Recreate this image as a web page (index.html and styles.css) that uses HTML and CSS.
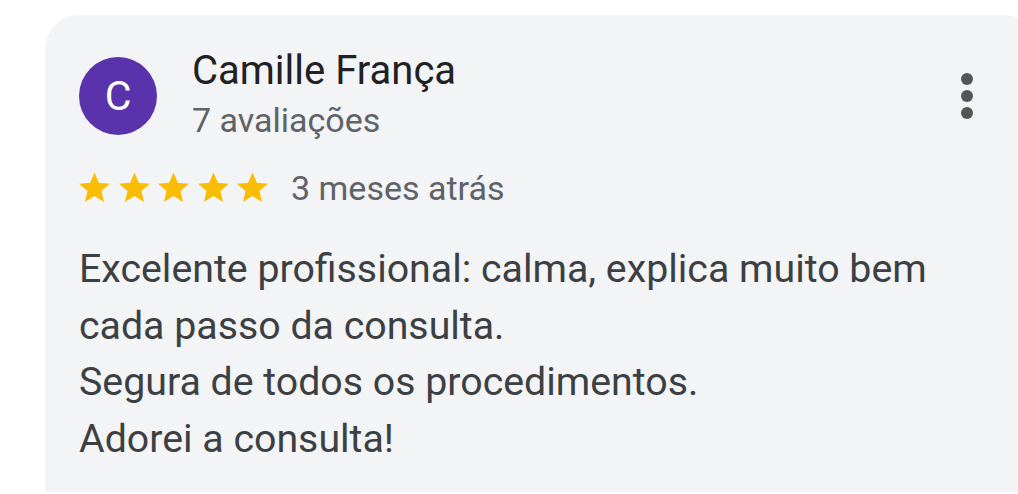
FILE: index.html
```html
<!DOCTYPE html>
<html lang="pt-BR">

<head>
    <meta charset="UTF-8">
    <meta name="viewport" content="width=device-width, initial-scale=1.0">
    <title>Avaliação</title>
    <link rel="stylesheet" href="styles.css">
</head>

<body>
    <div class="review">
        <div class="review-head">
            <div class="avatar">C</div>
            <div class="author">
                <div class="author-name">Camille França</div>
                <div class="author-count">7 avaliações</div>
            </div>
            <div class="menu">
                <span class="dot"></span>
                <span class="dot"></span>
                <span class="dot"></span>
            </div>
        </div>
        <div class="rating">
            <div class="stars">
                <svg viewBox="0 0 24 24"><path d="M12 17.27L18.18 21l-1.64-7.03L22 9.24l-7.19-.61L12 2 9.19 8.63 2 9.24l5.46 4.73L5.82 21z"/></svg>
                <svg viewBox="0 0 24 24"><path d="M12 17.27L18.18 21l-1.64-7.03L22 9.24l-7.19-.61L12 2 9.19 8.63 2 9.24l5.46 4.73L5.82 21z"/></svg>
                <svg viewBox="0 0 24 24"><path d="M12 17.27L18.18 21l-1.64-7.03L22 9.24l-7.19-.61L12 2 9.19 8.63 2 9.24l5.46 4.73L5.82 21z"/></svg>
                <svg viewBox="0 0 24 24"><path d="M12 17.27L18.18 21l-1.64-7.03L22 9.24l-7.19-.61L12 2 9.19 8.63 2 9.24l5.46 4.73L5.82 21z"/></svg>
                <svg viewBox="0 0 24 24"><path d="M12 17.27L18.18 21l-1.64-7.03L22 9.24l-7.19-.61L12 2 9.19 8.63 2 9.24l5.46 4.73L5.82 21z"/></svg>
            </div>
            <span class="when">3 meses atrás</span>
        </div>
        <p class="review-text">Excelente profissional: calma, explica muito bem<br>cada passo da consulta.<br>Segura de todos os procedimentos.<br>Adorei a consulta!</p>
    </div>
</body>

</html>
```

FILE: styles.css
```css
  /* Cartão de avaliação */
  body {
      background-color: #fff;
      font-family: Roboto, "Noto Sans", sans-serif;
      margin: 0;
      padding: 15px 0 2px 45px;
      overflow: hidden;
  }

  .review {
      background-color: #f3f4f6;
      border-radius: 34px 34px 0 0;
      height: 477px;
      margin-right: -20px;
      padding: 42px 0 0 34px;
      box-sizing: border-box;
  }

  .review-head {
      display: flex;
      align-items: flex-start;
  }

  .avatar {
      width: 78px;
      height: 78px;
      border-radius: 50%;
      background-color: #5932ac;
      color: #fff;
      font-size: 41px;
      display: flex;
      align-items: center;
      justify-content: center;
      flex-shrink: 0;
  }

  .author {
      margin-left: 35px;
      margin-top: -10px;
  }

  .author-name {
      color: #202124;
      font-size: 40px;
      line-height: 48px;
  }

  .author-count {
      color: #5f6368;
      font-size: 34px;
      line-height: 44px;
      margin-top: 3px;
  }

  .menu {
      margin-left: auto;
      margin-right: 65px;
      margin-top: 16px;
      display: flex;
      flex-direction: column;
      gap: 5px;
  }

  .dot {
      width: 12px;
      height: 12px;
      border-radius: 50%;
      background-color: #555;
  }

  .rating {
      display: flex;
      align-items: center;
      margin-top: 26px;
  }

  .stars {
      display: flex;
      gap: 2.5px;
      margin-left: -3px;
  }

  .stars svg {
      width: 37px;
      height: 38px;
      fill: #fbbc04;
  }

  .when {
      color: #5f6368;
      font-size: 34px;
      line-height: 40px;
      margin-left: 20px;
  }

  .review-text {
      color: #3c4043;
      font-size: 39.3px;
      line-height: 56.5px;
      margin: 33px 0 0;
  }
```
